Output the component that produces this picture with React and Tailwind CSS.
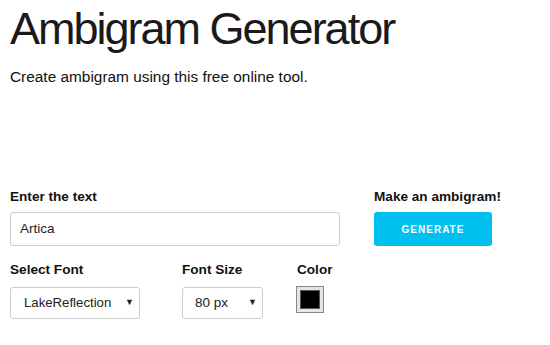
export default function App() {
  return (
    <div className="min-h-screen bg-white text-[#222] px-[10px]" style={{ fontFamily: '"Liberation Sans", Arial, sans-serif' }}>
      <h1 className="pt-[5px] text-[45px] leading-[48px] tracking-[-2px] font-normal text-[#1a1a1a]">Ambigram Generator</h1>
      <p className="mt-[14px] text-[15.4px] leading-[20px] text-[#111]">Create ambigram using this free online tool.</p>

      <div className="mt-[102px] flex gap-[34px]">
        <div className="w-[330px]">
          <label className="block text-[13.6px] leading-[16px] font-bold text-[#111]">Enter the text</label>
          <div className="mt-[7px] h-[34px] border border-[#ccc] rounded-[3px] flex items-center pl-[9px] text-[13.5px] text-[#222]">
            Artica
          </div>
        </div>
        <div>
          <label className="block text-[13.6px] leading-[16px] font-bold text-[#111]">Make an ambigram!</label>
          <button className="mt-[7px] h-[34px] w-[118px] rounded-[3px] bg-[#00c0ef] text-white text-[10px] font-bold tracking-[1px] uppercase">
            Generate
          </button>
        </div>
      </div>

      <div className="mt-[16px] flex">
        <div className="w-[172px]">
          <label className="block text-[13.6px] leading-[16px] font-bold text-[#111]">Select Font</label>
          <div className="mt-[9px] h-[32px] w-[130px] border border-[#ccc] rounded-[3px] flex items-center justify-between pl-[13px] pr-[5px] text-[13.2px] text-[#222]">
            <span>LakeReflection</span>
            <span className="text-[9px]">▼</span>
          </div>
        </div>
        <div className="w-[114px]">
          <label className="block text-[13.6px] leading-[16px] font-bold text-[#111]">Font Size</label>
          <div className="mt-[9px] h-[32px] w-[81px] border border-[#ccc] rounded-[3px] flex items-center justify-between pl-[12px] pr-[5px] text-[13.5px] text-[#222]">
            <span>80 px</span>
            <span className="text-[9px]">▼</span>
          </div>
        </div>
        <div>
          <label className="block text-[13.6px] leading-[16px] font-bold text-[#111] pl-[1px]">Color</label>
          <div className="mt-[8px] h-[27px] w-[28px] border border-[#888] bg-[#e5e5e5] p-[3px]">
            <div className="h-full w-full bg-black border border-[#555]"></div>
          </div>
        </div>
      </div>
    </div>
  );
}
